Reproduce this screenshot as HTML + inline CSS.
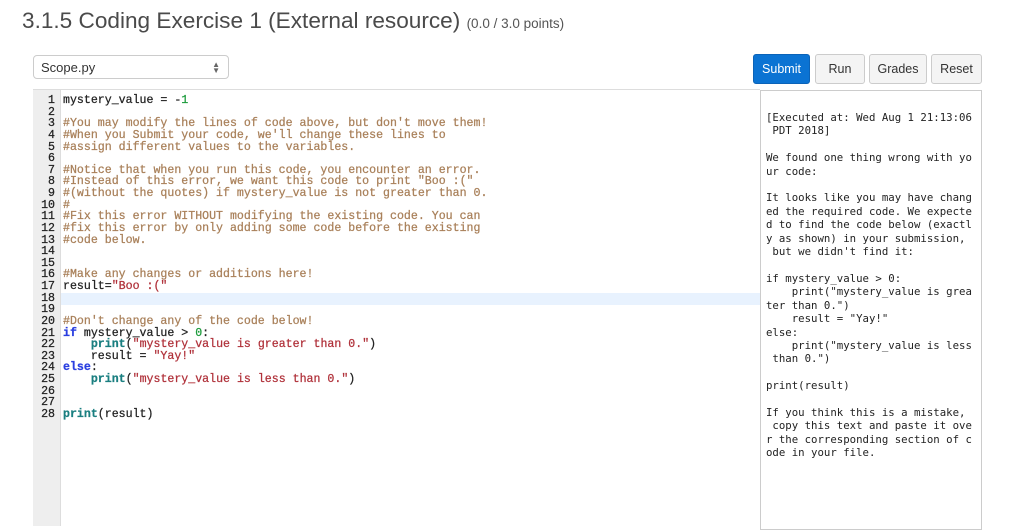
<!DOCTYPE html>
<html><head><meta charset="utf-8"><style>
body{margin:0;width:1024px;height:525px;background:#fff;font-family:"Liberation Sans",sans-serif;overflow:hidden;position:relative}
.t{position:absolute;left:22px;top:8px;font-size:22.6px;color:#4a4a4a}
.t small{font-size:13.5px;color:#555}
.sel{position:absolute;left:33px;top:55px;height:24px;border:1px solid #ccc;border-radius:4px;font-size:13px;color:#333;line-height:24px;padding-left:7px;box-sizing:border-box;width:196px}
.sel span{position:absolute;right:8px;font-size:8px;color:#666;line-height:6px;top:6px}
.btn{position:absolute;top:54px;height:30px;border:1px solid #ccc;border-radius:3px;background:#f4f4f4;font-size:12.5px;color:#333;text-align:center;line-height:29px;box-sizing:border-box}
.ed{position:absolute;left:33px;top:89px;width:727px;height:436px;border-top:1px solid #ddd}
.gut{position:absolute;left:0;top:0;width:27px;height:436px;background:#eee;border-right:1px solid #ddd}
pre{margin:0;font-family:"Liberation Mono",monospace;}
.code{position:absolute;left:0;top:5px;font-size:11.6px;line-height:11.63px;color:#222;-webkit-text-stroke:0.25px}
.ln{display:inline-block;width:22px;text-align:right;margin-right:8px;color:#222}
.c{color:#a9805a}.s{color:#b0313a}.k{color:#2a3fe0;font-weight:bold}.f{color:#1a7f80;font-weight:bold}.n{color:#1a9a3a}
.hl{position:absolute;left:28px;top:203px;width:699px;height:12px;background:#e8f2fe}
.out{position:absolute;left:760px;top:90px;width:222px;height:440px;border:1px solid #ccc;box-sizing:border-box}
.out pre{position:absolute;left:5px;top:20px;font-family:"DejaVu Sans Mono",monospace;font-size:10.7px;line-height:13.4px;color:#222}
</style></head><body>
<div class="t">3.1.5 Coding Exercise 1 (External resource) <small>(0.0 / 3.0 points)</small></div>
<div class="sel">Scope.py<span>▲<br>▼</span></div>
<div class="btn" style="left:753px;width:57px;background:#0b73d3;border-color:#0b63b8;color:#fff">Submit</div>
<div class="btn" style="left:815px;width:50px">Run</div>
<div class="btn" style="left:869px;width:58px">Grades</div>
<div class="btn" style="left:931px;width:51px">Reset</div>
<div class="ed"><div class="gut"></div><div class="hl"></div>
<pre class="code"><span class="ln">1</span>mystery_value = -<span class="n">1</span>
<span class="ln">2</span>
<span class="ln">3</span><span class="c">#You may modify the lines of code above, but don't move them!</span>
<span class="ln">4</span><span class="c">#When you Submit your code, we'll change these lines to</span>
<span class="ln">5</span><span class="c">#assign different values to the variables.</span>
<span class="ln">6</span>
<span class="ln">7</span><span class="c">#Notice that when you run this code, you encounter an error.</span>
<span class="ln">8</span><span class="c">#Instead of this error, we want this code to print "Boo :("</span>
<span class="ln">9</span><span class="c">#(without the quotes) if mystery_value is not greater than 0.</span>
<span class="ln">10</span><span class="c">#</span>
<span class="ln">11</span><span class="c">#Fix this error WITHOUT modifying the existing code. You can</span>
<span class="ln">12</span><span class="c">#fix this error by only adding some code before the existing</span>
<span class="ln">13</span><span class="c">#code below.</span>
<span class="ln">14</span>
<span class="ln">15</span>
<span class="ln">16</span><span class="c">#Make any changes or additions here!</span>
<span class="ln">17</span>result=<span class="s">"Boo :("</span>
<span class="ln">18</span>
<span class="ln">19</span>
<span class="ln">20</span><span class="c">#Don't change any of the code below!</span>
<span class="ln">21</span><span class="k">if</span> mystery_value &gt; <span class="n">0</span>:
<span class="ln">22</span>    <span class="f">print</span>(<span class="s">"mystery_value is greater than 0."</span>)
<span class="ln">23</span>    result = <span class="s">"Yay!"</span>
<span class="ln">24</span><span class="k">else</span>:
<span class="ln">25</span>    <span class="f">print</span>(<span class="s">"mystery_value is less than 0."</span>)
<span class="ln">26</span>
<span class="ln">27</span>
<span class="ln">28</span><span class="f">print</span>(result)</pre></div>
<div class="out"><pre>[Executed at: Wed Aug 1 21:13:06
 PDT 2018]

We found one thing wrong with yo
ur code:

It looks like you may have chang
ed the required code. We expecte
d to find the code below (exactl
y as shown) in your submission,
 but we didn't find it:

if mystery_value &gt; 0:
    print("mystery_value is grea
ter than 0.")
    result = "Yay!"
else:
    print("mystery_value is less
 than 0.")

print(result)

If you think this is a mistake,
 copy this text and paste it ove
r the corresponding section of c
ode in your file.</pre></div>
</body></html>
